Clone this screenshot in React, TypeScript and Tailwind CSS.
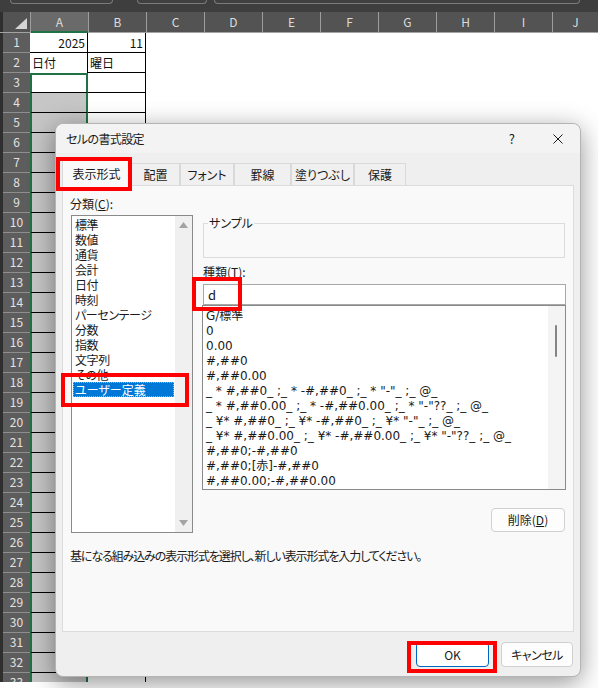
import React from 'react';

const cats = ['標準', '数値', '通貨', '会計', '日付', '時刻', 'パーセンテージ', '分数', '指数', '文字列', 'その他', 'ユーザー定義'];
const types = [
  'G/標準',
  '0',
  '0.00',
  '#,##0',
  '#,##0.00',
  '_ * #,##0_ ;_ * -#,##0_ ;_ * "-"_ ;_ @_',
  '_ * #,##0.00_ ;_ * -#,##0.00_ ;_ * "-"??_ ;_ @_',
  '_ ¥* #,##0_ ;_ ¥* -#,##0_ ;_ ¥* "-"_ ;_ @_',
  '_ ¥* #,##0.00_ ;_ ¥* -#,##0.00_ ;_ ¥* "-"??_ ;_ @_',
  '#,##0;-#,##0',
  '#,##0;[赤]-#,##0',
  '#,##0.00;-#,##0.00',
];
const otherCols = ['C', 'D', 'E', 'F', 'G', 'H', 'I'];

function ColHeader() {
  return (
    <div className="flex h-[21px] bg-[#535353] border-b border-[#a3a3a3] text-[12px] leading-[20px] text-[#dcdcdc]">
      <div className="w-[30px] shrink-0 border-l-[3px] border-[#2f2f2f] relative">
        <svg className="absolute right-[3px] bottom-[3px]" width="12" height="11">
          <polygon points="12,0 12,11 0,11" fill="#d4d4d4" />
        </svg>
      </div>
      <div className="w-[58px] shrink-0 bg-[#6a6a6a] border-l border-[#9d9d9d] text-center relative">
        A
        <div className="absolute left-0 right-0 -bottom-[1px] h-[2px] bg-[#1f7244]" />
      </div>
      <div className="w-[58px] shrink-0 border-l border-[#9d9d9d] text-center">B</div>
      {otherCols.map((c) => (
        <div key={c} className="w-[58px] shrink-0 border-l border-[#9d9d9d] text-center">{c}</div>
      ))}
      <div className="flex-1 border-l border-[#9d9d9d] text-center">J</div>
    </div>
  );
}

function GridRow({ n }: { n: number }) {
  let aCls = '';
  if (n === 1) aCls = 'bg-white border-r border-b border-black justify-end pr-[2px]';
  else if (n === 2) aCls = 'bg-white border-r border-black pl-[2px]';
  else if (n === 3) aCls = 'bg-white border-x-2 border-t-2 border-[#1f7244] border-b border-b-black';
  else aCls = 'bg-[#c6c6c6] border-x-2 border-[#1f7244] border-b border-b-black';
  const a = n === 1 ? '2025' : n === 2 ? '日付' : '';
  const b = n === 1 ? '11' : n === 2 ? '曜日' : '';
  return (
    <div className="flex h-[20px] text-[12px] leading-[18px]">
      <div className="w-[30px] shrink-0 border-l-[3px] border-[#2f2f2f] bg-[#5d5d5d] text-[#e3e3e3] text-center shadow-[inset_0_-1px_0_#8e8e8e]">
        {n}
      </div>
      <div className={`w-[58px] shrink-0 flex items-center text-[#111] ${aCls}`}>{a}</div>
      <div className={`w-[58px] shrink-0 flex items-center text-[#111] bg-white border-r border-b border-black ${n === 1 ? 'justify-end pr-[2px]' : 'pl-[2px]'}`}>
        {b}
      </div>
      <div className="flex-1 bg-white" />
    </div>
  );
}

function Tab({ label, w, active }: { label: string; w: string; active?: boolean }) {
  return (
    <div
      className={`${w} shrink-0 flex items-center justify-center text-[12px] text-[#1a1a1a] border border-b-0 border-[#d9d9d9] ${
        active ? 'h-[26px] bg-[#f9f9f9] relative top-[1px] z-10' : 'h-[22px] bg-[#f0f0f0]'
      }`}
    >
      {label}
    </div>
  );
}

export default function App() {
  return (
    <div className="relative w-[598px] h-[688px] overflow-hidden bg-white font-['Noto_Sans_CJK_JP','Noto_Sans',sans-serif]">
      {/* top strip */}
      <div className="h-[12px] bg-[#3e3e3e] relative">
        <div className="absolute left-[10px] top-0 w-[103px] h-[4px] border-b border-x border-[#7a7a7a] rounded-b-[4px] bg-[#404040]" />
        <div className="absolute left-[137px] top-0 w-[70px] h-[4px] border-b border-x border-[#7a7a7a] rounded-b-[4px] bg-[#404040]" />
        <div className="absolute left-[214px] top-0 w-[366px] h-[4px] border-b border-x border-[#7a7a7a] rounded-b-[4px] bg-[#404040]" />
      </div>
      <div className="h-[670px] overflow-hidden">
        <ColHeader />
        {Array.from({ length: 33 }, (_, i) => (
          <GridRow key={i} n={i + 1} />
        ))}
      </div>

      {/* dialog */}
      <div className="absolute left-[55px] top-[123px] w-[526px] h-[554px] rounded-[8px] border border-[#b4b4b4] bg-[#efefef] shadow-[0_6px_26px_rgba(0,0,0,0.42)] flex flex-col text-[#1a1a1a] [font-feature-settings:'palt']">
        <div className="h-[29px] shrink-0 rounded-t-[8px] bg-[#f3f3f3] flex items-center pl-[10px] text-[12px] leading-[14px]">
          <span className="tracking-[-0.6px]">セルの書式設定</span>
          <span className="ml-auto mr-[38px] text-[13px]">?</span>
          <svg className="mr-[17px]" width="10" height="10" viewBox="0 0 10 10">
            <path d="M0.5 0.5 L9.5 9.5 M9.5 0.5 L0.5 9.5" stroke="#1a1a1a" strokeWidth="1" />
          </svg>
        </div>
        <div className="h-[32px] shrink-0 flex items-end pl-[6px]">
          <Tab label="表示形式" w="w-[69px]" active />
          <Tab label="配置" w="w-[49px]" />
          <Tab label="フォント" w="w-[54px]" />
          <Tab label="罫線" w="w-[57px]" />
          <Tab label="塗りつぶし" w="w-[63px]" />
          <Tab label="保護" w="w-[52px]" />
        </div>
        <div className="mx-[6px] w-[512px] h-[447px] shrink-0 border border-[#dcdcdc] bg-[#f9f9f9] pl-[8px] pt-[10px] text-[12px]">
          <div className="flex gap-[9px]">
            {/* left column */}
            <div className="w-[122px] shrink-0 flex flex-col">
              <div className="h-[16px] leading-[16px] -ml-[1px]">
                分類(<span className="underline">C</span>):
              </div>
              <div className="mt-[3px] h-[318px] border border-[#8a8a8a] bg-white relative pt-[1px] pl-[1px]">
                {cats.map((c, i) =>
                  i === cats.length - 1 ? (
                    <div key={c} className="w-[101px] h-[15px] leading-[13px] bg-[#0078d7] text-white pl-[1px] border border-dotted border-[#f3a24a]">
                      {c}
                    </div>
                  ) : (
                    <div key={c} className="h-[15px] leading-[15px] pl-[2px] tracking-[-0.4px]">
                      {c}
                    </div>
                  )
                )}
                <div className="absolute right-0 top-0 bottom-0 w-[17px] bg-[#f0f0f0] flex flex-col items-center justify-between py-[6px]">
                  <svg width="9" height="6"><polygon points="4.5,0 9,6 0,6" fill="#a3a3a3" /></svg>
                  <svg width="9" height="6"><polygon points="0,0 9,0 4.5,6" fill="#a3a3a3" /></svg>
                </div>
              </div>
            </div>
            {/* right column */}
            <div className="w-[364px] shrink-0 flex flex-col">
              <div className="mt-[27px] ml-[1px] w-[362px] h-[35px] border border-[#dcdcdc] relative">
                <span className="absolute -top-[8px] left-[4px] px-[1px] bg-[#f9f9f9] leading-[14px]">サンプル</span>
              </div>
              <div className="mt-[7px] h-[14px] leading-[14px] ml-[1px]">
                種類(<span className="underline">T</span>):
              </div>
              <div className="mt-[5px] ml-[1px] h-[21px] border border-[#a8a8a8] bg-white pl-[4px] text-[13px] leading-[19px]">d</div>
              <div className="h-[185px] border border-[#8a8a8a] bg-white relative pt-[3px] pl-[3px] font-['DejaVu_Sans','Noto_Sans_CJK_JP',sans-serif] text-[12px]">
                {types.map((t) => (
                  <div key={t} className="h-[15px] leading-[15px] whitespace-pre">
                    {t}
                  </div>
                ))}
                <div className="absolute right-0 top-0 bottom-0 w-[17px] bg-[#f4f4f4]">
                  <div className="absolute left-[7px] top-[19px] w-[2px] h-[32px] rounded-full bg-[#858585]" />
                </div>
              </div>
              <div className="mt-[18px] self-end mr-[1px] w-[74px] h-[24px] rounded-[4px] border border-[#d0d0d0] bg-[#fdfdfd] flex items-center justify-center leading-[14px]">
                削除(<span className="underline">D</span>)
              </div>
            </div>
          </div>
          <div className="mt-[15px] leading-[16px] -ml-[1px] tracking-[-1.1px]">基になる組み込みの表示形式を選択し、新しい表示形式を入力してください。</div>
        </div>
        <div className="flex justify-end gap-[12px] pr-[7px] pt-[10px] text-[12px]">
          <div className="w-[73px] h-[25px] rounded-[4px] border border-[#0067c0] bg-white flex items-center justify-center">OK</div>
          <div className="w-[72px] h-[25px] rounded-[4px] border border-[#d0d0d0] bg-[#fdfdfd] flex items-center justify-center tracking-[-0.5px]">キャンセル</div>
        </div>
      </div>

      {/* red annotation boxes */}
      <div className="absolute left-[56px] top-[157px] w-[76px] h-[34px] border-[4px] border-[#ff0000] z-20" />
      <div className="absolute left-[61px] top-[373px] w-[128px] h-[34px] border-[4px] border-[#ff0000] z-20" />
      <div className="absolute left-[192px] top-[277px] w-[50px] h-[34px] border-[4px] border-[#ff0000] z-20" />
      <div className="absolute left-[407px] top-[641px] w-[90px] h-[32px] border-[4px] border-[#ff0000] z-20" />
    </div>
  );
}
